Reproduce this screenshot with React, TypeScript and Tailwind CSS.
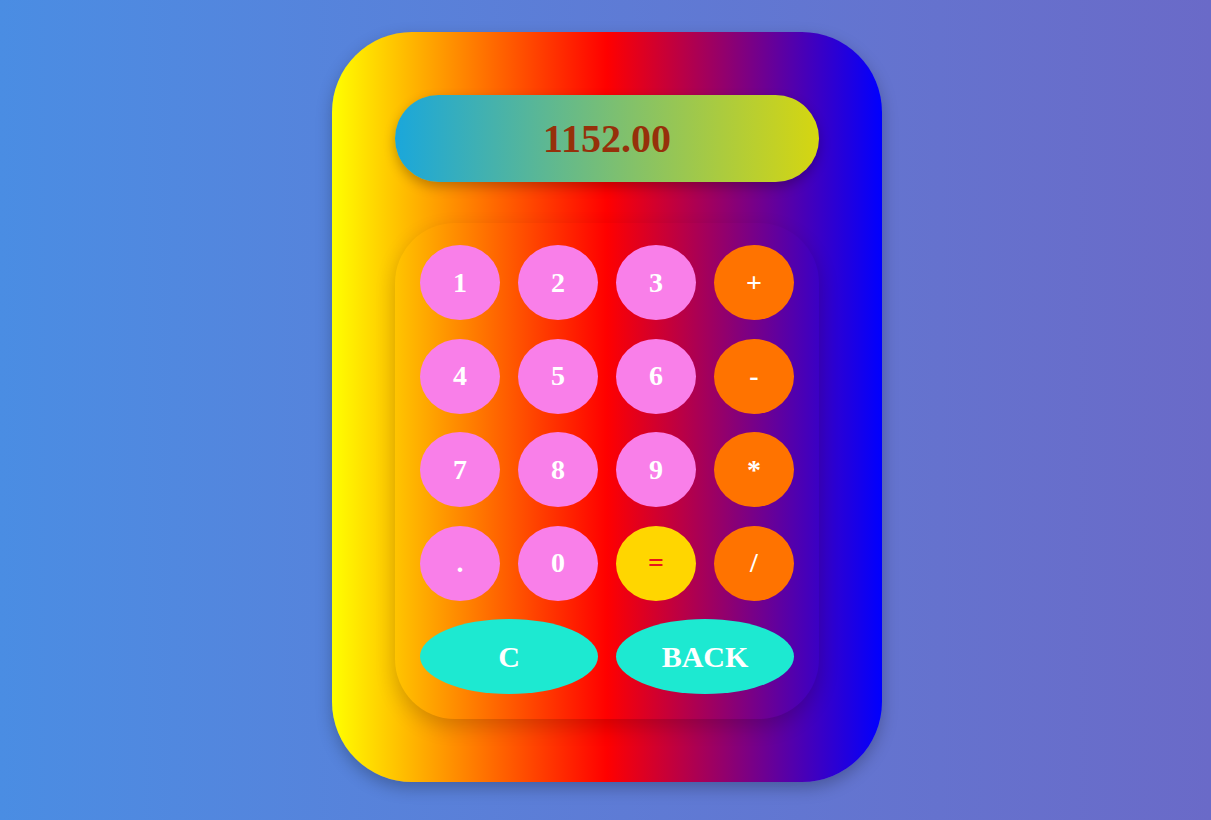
import React, { useState } from "react";

const keys = [
  { label: "1", kind: "num" },
  { label: "2", kind: "num" },
  { label: "3", kind: "num" },
  { label: "+", kind: "op" },
  { label: "4", kind: "num" },
  { label: "5", kind: "num" },
  { label: "6", kind: "num" },
  { label: "-", kind: "op" },
  { label: "7", kind: "num" },
  { label: "8", kind: "num" },
  { label: "9", kind: "num" },
  { label: "*", kind: "op" },
  { label: ".", kind: "num" },
  { label: "0", kind: "num" },
  { label: "=", kind: "eq" },
  { label: "/", kind: "op" },
];

const keyStyle: Record<string, string> = {
  num: "bg-[#f97fe9] text-white",
  op: "bg-[#ff7300] text-white",
  eq: "bg-[#ffd600] text-[#e8141c]",
};

export default function App() {
  const [value] = useState("1152.00");

  return (
    <div className="min-h-[820px] w-full flex justify-center items-start pt-[32px] pl-[3px] bg-gradient-to-r from-[#4a8de3] to-[#6a6ac8] font-['Times_New_Roman','Liberation_Serif',serif]">
      <div className="w-[550px] h-[750px] rounded-[80px] px-[63px] pt-[63px] bg-[linear-gradient(to_right,#ffff00,#ff0000,#0000ff)] shadow-[0_6px_16px_rgba(0,0,0,0.25)]">
        {/* display */}
        <div className="h-[87px] rounded-full flex items-center justify-center bg-[linear-gradient(to_right,#1aa7db,#d6d610)] shadow-[0_5px_12px_rgba(0,0,0,0.25)]">
          <span className="text-[40px] font-extrabold text-[#96300a] leading-none">{value}</span>
        </div>

        {/* keypad */}
        <div className="mt-[41px] rounded-[60px] px-[25px] pt-[22px] pb-[25px] shadow-[0_8px_20px_rgba(0,0,0,0.18)]">
          <div className="grid grid-cols-4 gap-x-[18px] gap-y-[18.5px]">
            {keys.map((k) => (
              <button
                key={k.label}
                className={`h-[75px] rounded-[50%] text-[28px] font-extrabold leading-none ${keyStyle[k.kind]}`}
              >
                {k.label}
              </button>
            ))}
            <button className="col-span-2 h-[75px] rounded-[50%] bg-[#1de9d1] text-white text-[30px] font-extrabold">
              C
            </button>
            <button className="col-span-2 h-[75px] rounded-[50%] bg-[#1de9d1] text-white text-[30px] font-extrabold">
              BACK
            </button>
          </div>
        </div>
      </div>
    </div>
  );
}
